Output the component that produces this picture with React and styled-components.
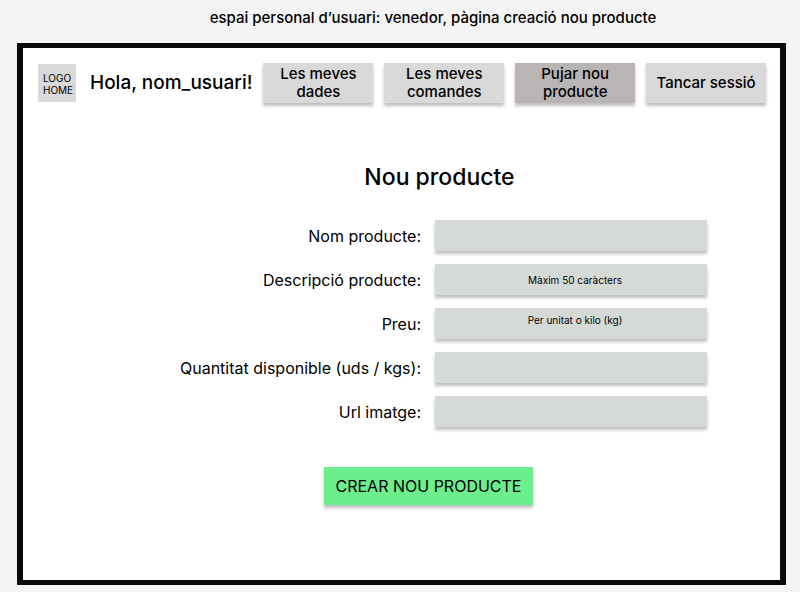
import React from "react";
import styled, { createGlobalStyle } from "styled-components";

const GlobalStyle = createGlobalStyle`
  *, *::before, *::after { box-sizing: border-box; }
  body {
    margin: 0;
    background: #f4f4f4;
    color: #000;
    font-family: Inter, "Liberation Sans", sans-serif;
    font-weight: 400;
  }
  button, input { font: inherit; color: inherit; }
`;

const Page = styled.div`
  min-height: 100vh;
  padding: 8px 14px 7px 17px;
  display: flex;
  flex-direction: column;
`;

const Caption = styled.p`
  margin: 0 0 15px;
  padding-left: 63px;
  font-size: 15px;
  font-weight: 500;
  line-height: 20px;
  text-align: center;
`;

const Frame = styled.main`
  flex: 1;
  border: 6px solid #0a0a0a;
  border-width: 5px 6px 5px;
  background: #fff;
`;

const Header = styled.header`
  display: flex;
  align-items: center;
  padding: 15px 14px 0 15px;
`;

const Logo = styled.a`
  flex: none;
  width: 38px;
  height: 38px;
  margin-right: 14px;
  padding: 8px 0 0 5px;
  background: #d9d9d9;
  color: inherit;
  font-size: 10px;
  line-height: 12px;
  text-decoration: none;
`;

const Greeting = styled.span`
  flex: none;
  margin-right: 11px;
  font-size: 19px;
  font-weight: 500;
  line-height: 24px;
  white-space: nowrap;
`;

const Nav = styled.nav`
  flex: 1;
  display: flex;
  gap: 11px;
`;

const NavButton = styled.button`
  flex: ${({ $grow }) => $grow} 1 0;
  min-width: 0;
  height: 40px;
  padding: 0;
  border: 0;
  background: ${({ $active }) => ($active ? "#b9b5b4" : "#d9d9d9")};
  box-shadow: 0 3px 3px rgba(0, 0, 0, 0.25);
  font-size: 15px;
  font-weight: 500;
  line-height: 18px;
  white-space: pre-line;
  cursor: pointer;
`;

const Title = styled.h1`
  margin: 59px 0 28px;
  padding-left: 76px;
  font-size: 23px;
  font-weight: 500;
  line-height: 30px;
  text-align: center;
`;

const Form = styled.form`
  display: flex;
  flex-direction: column;
  gap: 13px;
`;

const Row = styled.div`
  display: grid;
  grid-template-columns: minmax(0, 1fr) 272px;
  column-gap: 14px;
  align-items: center;
  padding-right: 73px;
`;

const Label = styled.label`
  font-size: 16px;
  line-height: 20px;
  text-align: right;
`;

const Field = styled.input`
  width: 100%;
  height: 31px;
  padding: ${({ $raised }) => ($raised ? "0 0 8px 8px" : "0 0 0 8px")};
  border: 0;
  border-radius: 0;
  background: #d6dad7;
  box-shadow: 0 3px 3px rgba(0, 0, 0, 0.25);
  font-size: 10px;
  text-align: center;
  &::placeholder { color: #000; opacity: 1; }
`;

const Actions = styled.div`
  display: flex;
  justify-content: center;
  padding: 27px 0 32px 54px;
`;

const SubmitButton = styled.button`
  height: 38px;
  padding: 0 12px;
  border: 0;
  background: #6cee8d;
  box-shadow: 0 3px 3px rgba(0, 0, 0, 0.25);
  font-size: 16px;
  line-height: 20px;
  cursor: pointer;
`;

const navItems = [
  { text: "Les meves\ndades", grow: 11 },
  { text: "Les meves\ncomandes", grow: 12 },
  { text: "Pujar nou\nproducte", grow: 12, active: true },
  { text: "Tancar sessió", grow: 12 },
];

const fields = [
  { id: "nom", label: "Nom producte:" },
  { id: "descripcio", label: "Descripció producte:", hint: "Màxim 50 caràcters", maxLength: 50 },
  { id: "preu", label: "Preu:", hint: "Per unitat o kilo (kg)", raised: true },
  { id: "quantitat", label: "Quantitat disponible (uds / kgs):" },
  { id: "imatge", label: "Url imatge:" },
];

export default function App() {
  return (
    <>
      <GlobalStyle />
      <Page>
        <Caption>espai personal d’usuari: venedor, pàgina creació nou producte</Caption>
        <Frame>
          <Header>
            <Logo href="#">LOGO<br />HOME</Logo>
            <Greeting>Hola, nom_usuari!</Greeting>
            <Nav>
              {navItems.map((item) => (
                <NavButton
                  key={item.text}
                  type="button"
                  $grow={item.grow}
                  $active={item.active}
                  aria-current={item.active ? "page" : undefined}
                >
                  {item.text}
                </NavButton>
              ))}
            </Nav>
          </Header>
          <Title>Nou producte</Title>
          <Form onSubmit={(event) => event.preventDefault()}>
            {fields.map((field) => (
              <Row key={field.id}>
                <Label htmlFor={field.id}>{field.label}</Label>
                <Field
                  id={field.id}
                  name={field.id}
                  type="text"
                  placeholder={field.hint}
                  maxLength={field.maxLength}
                  $raised={field.raised}
                />
              </Row>
            ))}
            <Actions>
              <SubmitButton type="submit">CREAR NOU PRODUCTE</SubmitButton>
            </Actions>
          </Form>
        </Frame>
      </Page>
    </>
  );
}
